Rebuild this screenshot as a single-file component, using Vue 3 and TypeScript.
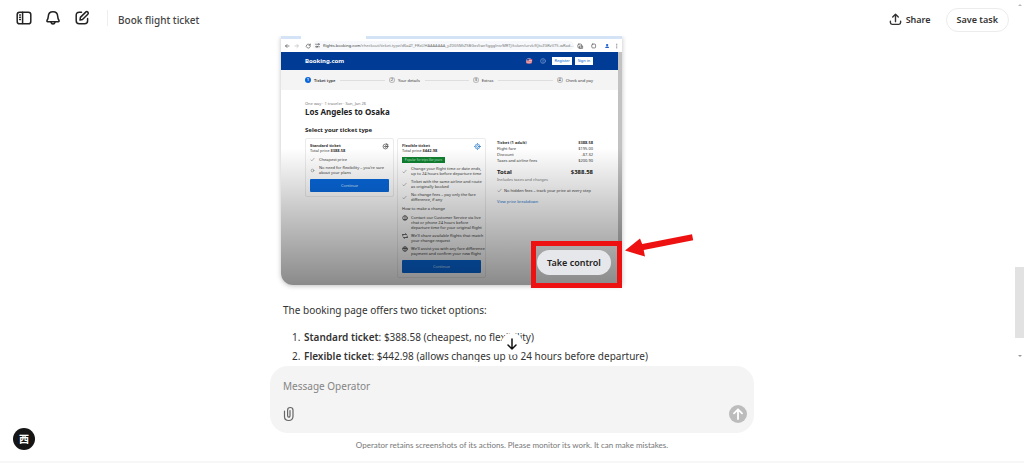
<script setup lang="ts">
import { ref } from 'vue'

interface TicketPoint {
  icon: 'check' | 'dot' | 'chat' | 'swap' | 'globe'
  lines: string[]
}

const message = ref('')

const steps: string[] = ['Ticket type', 'Your details', 'Extras', 'Check and pay']

const standardPoints: TicketPoint[] = [
  { icon: 'check', lines: ['Cheapest price'] },
  { icon: 'dot', lines: ["No need for flexibility – you're sure", 'about your plans'] },
]

const flexiblePoints: TicketPoint[] = [
  { icon: 'check', lines: ['Change your flight time or date ends,', 'up to 24 hours before departure time'] },
  { icon: 'check', lines: ['Ticket with the same airline and route', 'as originally booked'] },
  { icon: 'check', lines: ['No change fees – pay only the fare', 'difference, if any'] },
]

const changePoints: TicketPoint[] = [
  { icon: 'chat', lines: ['Contact our Customer Service via live', 'chat or phone 24 hours before', 'departure time for your original flight'] },
  { icon: 'swap', lines: ["We'll share available flights that match", 'your change request'] },
  { icon: 'globe', lines: ["We'll assist you with any fare difference", 'payment and confirm your new flight'] },
]

const fees = [
  { label: 'Ticket (1 adult)', value: '$388.58', strong: true },
  { label: 'Flight fare', value: '$195.00', strong: false },
  { label: 'Discount', value: '-$7.32', strong: false },
  { label: 'Taxes and airline fees', value: '$200.90', strong: false },
]

const options = [
  { name: 'Standard ticket', detail: '$388.58 (cheapest, no flexibility)' },
  { name: 'Flexible ticket', detail: '$442.98 (allows changes up to 24 hours before departure)' },
]
</script>

<template>
  <div class="app">
    <header class="topbar">
      <nav class="tools" aria-label="Tools">
        <button class="icon-btn" aria-label="Toggle sidebar">
          <svg viewBox="0 0 16 16" width="16" height="16">
            <rect x="1.2" y="2.2" width="13.6" height="11.6" rx="2.4" />
            <path d="M6.6 2.2v11.4M3.6 5h.8M3.6 7.2h.8M3.6 9.4h.8" />
          </svg>
        </button>
        <button class="icon-btn" aria-label="Notifications">
          <svg viewBox="0 0 16 16" width="16" height="16">
            <path d="M8 1.8c-2.8 0-4.6 2-4.7 4.6-.1 2-.6 3-1.3 4.1-.3.6 0 1.2.7 1.2h10.6c.7 0 1-.6.7-1.2-.7-1.1-1.2-2.1-1.3-4.1C12.6 3.8 10.8 1.8 8 1.8z" />
            <path d="M5.9 12c.3 1.3 1.1 2 2.1 2s1.8-.7 2.1-2" />
          </svg>
        </button>
        <button class="icon-btn" aria-label="New task">
          <svg viewBox="0 0 16 16" width="16" height="16">
            <path d="M7.5 2.3H5.2C3.2 2.3 2.2 3.3 2.2 5.3v5.4c0 2 1 3 3 3h5.4c2 0 3-1 3-3V8.5" />
            <path d="M6 10l.4-2.6 5.3-5.3c.6-.6 1.5-.6 2.1 0s.6 1.5 0 2.1L8.5 9.5z" />
          </svg>
        </button>
      </nav>
      <h1 class="task-title">Book flight ticket</h1>
      <button class="share">
        <svg viewBox="0 0 14 14" width="13" height="13">
          <path d="M7 9.3V1.5M4 4.3l3-3 3 3M1.5 8.8v1.5c0 1.3.6 1.9 1.9 1.9h7.2c1.3 0 1.9-.6 1.9-1.9V8.8" />
        </svg>
        Share
      </button>
      <button class="save">Save task</button>
    </header>

    <main class="conversation">
      <div class="thread">
        <figure class="preview">
          <div class="browser">
            <div class="tabs"><span class="tab"></span></div>
            <div class="toolbar">
              <svg viewBox="0 0 30 8" width="30" height="8" class="nav-icons">
                <path d="M6 4H2.5M4 2.5L2.5 4 4 5.5" />
                <path class="faint" d="M12 4h3M14 2.5L15.5 4 14 5.5" />
                <path d="M27 3a2 2 0 1 0 .3 1.6M27.3 2v1.3H26" />
              </svg>
              <span class="address">
                <svg viewBox="0 0 6 6" width="5" height="5"><path d="M.5 1.5h2.5M.5 4.5h1M3 4.5h2.5" /><circle cx="4.3" cy="1.5" r=".8" /><circle cx="2.2" cy="4.5" r=".8" /></svg>
                <span class="url"><b>flights.booking.com</b>/checkout/ticket-type/d6a4T_FRxUHAAAAAAA_yZ0G5MtZ5BGxs5wc5ggglnsrMRTJ/token/urvk/KJtvZGRzV75-wRad...</span>
              </span>
              <svg viewBox="0 0 50 8" width="48" height="8" class="ext-icons">
                <rect x="4" y="2" width="4" height="4" rx="1" /><path d="M6 4h3v2.5H6z" />
                <rect x="18.5" y="2" width="4" height="4" rx="1" />
                <circle class="user" cx="34.5" cy="3" r="1.2" /><path class="user" d="M32.5 6c0-2 4-2 4 0z" />
                <path d="M44.5 2v.5M44.5 3.8v.5M44.5 5.6v.5" />
              </svg>
            </div>
            <div class="viewport">
              <div class="site">
                <div class="brand-bar">
                  <span class="brand">Booking.com</span>
                  <svg viewBox="0 0 20 6" width="20" height="6" class="locale">
                    <rect x="0" y=".5" width="6" height="5" rx="2" fill="#f4dfe3" />
                    <path d="M0 3.2h6M.5 5h5M3 1.5h3" stroke="#d23b4c" stroke-width=".8" />
                    <path d="M.5 1h2.5v1.5H.2z" fill="#29489c" />
                    <circle cx="17" cy="3" r="2.4" fill="none" stroke="#8aa9de" stroke-width=".6" />
                    <path d="M17 4v.6M16.3 2.2c.2-.7 1.5-.6 1.3.2-.1.4-.6.4-.6 1" fill="none" stroke="#8aa9de" stroke-width=".5" />
                  </svg>
                  <a class="account" href="#">Register</a>
                  <a class="account" href="#">Sign in</a>
                </div>
                <ol class="steps">
                  <li v-for="(step, index) in steps" :key="step" :class="{ current: index === 0 }">
                    <span class="num">{{ index + 1 }}</span>{{ step }}
                  </li>
                </ol>
                <div class="page">
                  <p class="meta">One way · 1 traveler · Sun, Jan 26</p>
                  <h2>Los Angeles to Osaka</h2>
                  <div class="columns">
                    <section class="tickets">
                      <h3>Select your ticket type</h3>
                      <div class="cards">
                        <article class="ticket">
                          <svg class="emblem" viewBox="0 0 8 8" width="7" height="7"><circle cx="4" cy="4" r="2.8" /><path d="M2.5 4h3M4 2.8l1.5 1.2L4 5.2M5 .8l2 1.2" /></svg>
                          <h4>Standard ticket</h4>
                          <p>Total price <b>$388.58</b></p>
                          <ul class="points top">
                            <li v-for="point in standardPoints" :key="point.lines[0]">
                              <svg viewBox="0 0 6 6" width="5" height="5">
                                <path v-if="point.icon === 'check'" d="M1 3.5l1.2 1.2L5 1.5" />
                                <circle v-else cx="3" cy="3" r="1.6" />
                              </svg>
                              <span><span v-for="line in point.lines" :key="line" class="line">{{ line }}</span></span>
                            </li>
                          </ul>
                          <button class="continue">Continue</button>
                        </article>
                        <article class="ticket">
                          <svg class="emblem blue" viewBox="0 0 8 8" width="7" height="7"><circle cx="4" cy="4" r="2.8" /><circle cx="4" cy="4" r="1.2" /><path d="M4 0v1.2M4 6.8V8M0 4h1.2M6.8 4H8" /></svg>
                          <h4>Flexible ticket</h4>
                          <p>Total price <b>$442.98</b></p>
                          <span class="badge">Popular for trips like yours</span>
                          <ul class="points">
                            <li v-for="point in flexiblePoints" :key="point.lines[0]">
                              <svg viewBox="0 0 6 6" width="5" height="5"><path d="M1 3.5l1.2 1.2L5 1.5" /></svg>
                              <span><span v-for="line in point.lines" :key="line" class="line">{{ line }}</span></span>
                            </li>
                          </ul>
                          <p class="how">How to make a change</p>
                          <ul class="points dark">
                            <li v-for="point in changePoints" :key="point.lines[0]">
                              <svg viewBox="0 0 6 6" width="6" height="6">
                                <template v-if="point.icon === 'chat'"><circle cx="3" cy="3" r="2.3" /><path d="M3 1v2.5M1.8 4.5h2.4" /></template>
                                <path v-else-if="point.icon === 'swap'" d="M.8 1.5h3.8L3.6.6M5.2 4.5H1.4l1 .9M.8 1.5v1.5M5.2 4.5V3" />
                                <template v-else><circle cx="3" cy="3" r="2.3" /><path d="M1 2.5h3.5M3 1v4" /></template>
                              </svg>
                              <span><span v-for="line in point.lines" :key="line" class="line">{{ line }}</span></span>
                            </li>
                          </ul>
                          <button class="continue">Continue</button>
                        </article>
                      </div>
                    </section>
                    <aside class="summary">
                      <table>
                        <tbody>
                          <tr v-for="fee in fees" :key="fee.label" :class="{ strong: fee.strong }">
                            <td>{{ fee.label }}</td><td>{{ fee.value }}</td>
                          </tr>
                          <tr class="total"><td>Total</td><td>$388.58</td></tr>
                        </tbody>
                      </table>
                      <p class="muted">Includes taxes and charges</p>
                      <p class="nofees">
                        <svg viewBox="0 0 6 6" width="5" height="5"><path d="M1 3.5l1.2 1.2L5 1.5" /></svg>
                        No hidden fees – track your price at every step
                      </p>
                      <a href="#">View price breakdown</a>
                    </aside>
                  </div>
                </div>
              </div>
              <div class="scroll-track"></div>
            </div>
          </div>
          <div class="shade"></div>
          <button class="take-control">Take control</button>
          <div class="highlight"></div>
          <svg class="arrow" viewBox="0 0 70 24" width="70" height="24">
            <path d="M1 16.5L16 4.5l2.2 5.6L68 .2l1.2 6L19.7 16l1.3 6.6z" fill="#ee1111" />
          </svg>
        </figure>

        <p class="reply">The booking page offers two ticket options:</p>
        <ol class="options">
          <li v-for="option in options" :key="option.name"><b>{{ option.name }}</b>: {{ option.detail }}</li>
        </ol>
      </div>
      <button class="jump" aria-label="Scroll to latest">
        <svg viewBox="0 0 12 12" width="12" height="12"><path d="M6 1v10M2 7l4 4 4-4" /></svg>
      </button>
    </main>

    <footer class="dock">
      <form class="composer" @submit.prevent>
        <input v-model="message" type="text" aria-label="Message Operator" placeholder="Message Operator" />
        <div class="actions">
          <button type="button" class="attach" aria-label="Attach file">
            <svg viewBox="0 0 12 16" width="12" height="16">
              <path d="M1.5 5v5.5c0 2.6 1.6 4 4.2 4s4.3-1.5 4.3-4.2V4.2C10 2.4 9 1.5 7.3 1.5S4.6 2.5 4.6 4.2v5.6c0 .9.4 1.3 1.2 1.3s1.2-.4 1.2-1.3V4.6" />
            </svg>
          </button>
          <button type="submit" class="send" aria-label="Send">
            <svg viewBox="0 0 18 18" width="18" height="18"><path d="M9 14V4.5M5 8.3l4-4 4 4" /></svg>
          </button>
        </div>
      </form>
      <p class="notice">Operator retains screenshots of its actions. Please monitor its work. It can make mistakes.</p>
    </footer>

    <button class="avatar" aria-label="Account">西</button>
    <div class="page-scroll" aria-hidden="true">
      <span class="cap"></span><span class="thumb"></span><span class="cap down"></span>
    </div>
  </div>
</template>

<style>
body {
  background: #fff;
}
</style>

<style scoped>
.app {
  position: relative;
  display: flex;
  flex-direction: column;
  height: 100vh;
  overflow: hidden;
  box-sizing: border-box;
  border-bottom: 2px solid #f7f7f7;
  color: #333;
  font-family: "Noto Sans", "Noto Sans CJK SC", sans-serif;
  font-size: 10px;
  line-height: 20px;
}
.app *,
.app *::before {
  box-sizing: border-box;
}
h1, h2, h3, h4, p, ol, ul, figure {
  margin: 0;
  padding: 0;
}
ul, .steps {
  list-style: none;
}
button {
  border: 0;
  padding: 0;
  background: none;
  color: inherit;
  font: inherit;
  cursor: pointer;
}
svg {
  display: block;
  flex: none;
  fill: none;
  stroke: currentColor;
  stroke-linecap: round;
  stroke-linejoin: round;
}
a {
  text-decoration: none;
}

.topbar {
  flex: none;
  display: flex;
  align-items: center;
  height: 36px;
  padding: 3px 15px 0 16px;
}
.tools {
  display: flex;
  gap: 13px;
  margin-bottom: 4px;
  padding-right: 17px;
  border-right: 1px solid #eee;
  color: #222;
}
.icon-btn svg {
  stroke-width: 1.5;
}
.task-title {
  flex: 1;
  margin-left: 10px;
  font-size: 10px;
  font-weight: 500;
  color: #444;
}
.share {
  display: flex;
  align-items: center;
  gap: 4px;
  margin-right: 15px;
  font-weight: 600;
  font-size: 9px;
}
.share svg {
  stroke-width: 1.5;
}
.save {
  height: 24px;
  padding: 0 10px;
  border: 1px solid #ececec;
  border-radius: 12px;
  font-weight: 600;
  font-size: 9px;
}

.conversation {
  position: relative;
  flex: 1;
  min-height: 0;
  display: flex;
  justify-content: center;
}
.thread {
  width: 484px;
  padding: 0 12px 0 11px;
  overflow: hidden;
}
.preview {
  position: relative;
  width: 341px;
}
.browser {
  height: 249px;
  overflow: hidden;
  border-radius: 0 0 2px 12px;
  background: #fff;
  box-shadow: 0 1px 5px rgba(0, 0, 0, 0.25);
  color: #333;
  font-size: 4px;
  line-height: 5px;
  display: flex;
  flex-direction: column;
}
.tabs {
  height: 3px;
  padding-left: 20px;
  background: #d5e3f7;
}
.tab {
  display: block;
  width: 65px;
  height: 3px;
  background: #fff;
}
.toolbar {
  display: flex;
  align-items: center;
  height: 13px;
  padding-left: 2px;
}
.nav-icons, .ext-icons, .address svg {
  stroke: #555;
  stroke-width: 0.7;
}
.faint {
  stroke: #bbb;
}
.user {
  fill: #1a5fd0;
  stroke: none;
}
.address {
  flex: 1;
  display: flex;
  align-items: center;
  gap: 3px;
  min-width: 0;
  height: 9px;
  padding-left: 2px;
  border-radius: 5px;
  background: #f6f8fb;
}
.url {
  flex: 1;
  overflow: hidden;
  white-space: nowrap;
  color: #777;
}
.url b {
  font-weight: 400;
  color: #333;
}
.viewport {
  flex: 1;
  min-height: 0;
  display: flex;
}
.site {
  flex: 1;
}
.scroll-track {
  width: 4px;
  background: #c2c2c2;
}
.brand-bar {
  display: flex;
  align-items: center;
  gap: 3px;
  height: 18px;
  padding: 0 25px 0 24px;
  background: #003b95;
}
.brand {
  flex: 1;
  color: #fff;
  font-size: 6px;
  font-weight: 700;
}
.locale {
  margin-right: 3px;
  stroke: none;
}
.account {
  min-width: 18px;
  height: 8px;
  padding: 0 2px;
  background: #fff;
  color: #0065d0;
  line-height: 8px;
  text-align: center;
}
.steps {
  display: flex;
  align-items: center;
  height: 20px;
  padding: 0 25px 0 24px;
  background: #f4f4f4;
  gap: 4px;
}
.steps li {
  display: flex;
  align-items: center;
  gap: 3px;
  flex: none;
}
.steps li:not(:last-child) {
  flex: 1;
}
.steps li:not(:last-child)::after {
  content: "";
  flex: 1;
  height: 1px;
  margin-left: 2px;
  background: #dedede;
}
.num {
  width: 6px;
  height: 6px;
  border-radius: 50%;
  box-shadow: inset 0 0 0 1px #bbb;
  text-align: center;
  line-height: 6px;
}
.current {
  font-weight: 600;
}
.current .num {
  background: #0866d6;
  box-shadow: none;
  color: #fff;
}
.page {
  padding: 11px 25px 0 24px;
}
.meta {
  color: #777;
}
h2 {
  margin-top: 1px;
  font-size: 8px;
  line-height: 10px;
  color: #222;
}
.columns {
  display: flex;
  gap: 11px;
  margin-top: 9px;
}
.tickets {
  flex: none;
}
h3 {
  font-size: 6px;
  line-height: 8px;
  color: #222;
}
.cards {
  display: flex;
  align-items: flex-start;
  gap: 3px;
  margin-top: 4px;
}
.ticket {
  position: relative;
  width: 89px;
  padding: 4px;
  border: 1px solid #ebebeb;
  border-radius: 2px;
}
.emblem {
  position: absolute;
  top: 4px;
  right: 4px;
  stroke-width: 0.7;
}
.blue {
  color: #2576c9;
}
h4 {
  font-size: 4px;
  line-height: 5px;
}
.badge {
  display: block;
  width: 43px;
  height: 6px;
  margin: 4px 0 3px;
  background: #108030;
  color: #b9e5c3;
  font-size: 3px;
  line-height: 6px;
  text-align: center;
  white-space: nowrap;
}
.points {
  display: grid;
  gap: 3px;
}
.points.top {
  margin-top: 4px;
}
.points li {
  display: flex;
  align-items: center;
  gap: 4px;
  white-space: nowrap;
}
.points svg, .nofees svg {
  stroke: #888;
  stroke-width: 0.7;
}
.points.dark li {
  align-items: flex-start;
  gap: 3px;
}
.points.dark svg {
  stroke: #333;
}
.line {
  display: block;
}
.how {
  margin: 4px 0;
}
.continue {
  display: block;
  width: 100%;
  height: 13px;
  margin-top: 4px;
  border-radius: 1px;
  background: #0868dc;
  color: #cfe2ff;
  font-size: 4px;
  line-height: 13px;
}
.summary {
  flex: 1;
  padding-top: 14px;
  white-space: nowrap;
}
table {
  width: 100%;
  border-collapse: collapse;
}
td {
  padding: 0 0 1px;
}
td:last-child {
  text-align: right;
}
.strong td {
  font-weight: 700;
}
.total td {
  padding-top: 4px;
  font-size: 6px;
  line-height: 8px;
  font-weight: 700;
  color: #222;
}
.muted {
  color: #777;
}
.nofees {
  display: flex;
  align-items: center;
  gap: 2px;
  margin: 6px 0;
}
.summary a {
  display: block;
  color: #1a73cf;
}
.shade {
  position: absolute;
  inset: 0;
  border-radius: 0 0 2px 12px;
  background: linear-gradient(to bottom, transparent 45%, rgba(0, 0, 0, 0.2) 68%, rgba(0, 0, 0, 0.46));
}
.take-control {
  position: absolute;
  right: 11px;
  bottom: 10px;
  width: 74px;
  height: 25px;
  border-radius: 13px;
  background: #e6e7ea;
  color: #222;
  font-size: 9px;
  font-weight: 600;
}
.highlight {
  position: absolute;
  right: 0;
  bottom: -3px;
  width: 91px;
  height: 47px;
  border: 5px solid #ee1111;
}
.arrow {
  position: absolute;
  left: 343px;
  top: 198px;
  stroke: none;
}
.reply {
  margin-top: 15px;
  padding-left: 2px;
}
.options {
  margin-top: 8px;
  padding-left: 22px;
  line-height: 19px;
}
.options li {
  padding-left: 1px;
  white-space: nowrap;
}
.options b {
  font-weight: 600;
}
.jump {
  position: absolute;
  left: calc(50% - 11px);
  bottom: 7px;
  display: grid;
  place-items: center;
  width: 22px;
  height: 22px;
  border-radius: 50%;
  background: #fff;
  color: #111;
}
.jump svg {
  stroke-width: 1.5;
}

.dock {
  flex: none;
  display: flex;
  flex-direction: column;
  align-items: center;
  padding: 4px 0 8px;
}
.composer {
  width: 484px;
  padding: 10px 7px 9px 13px;
  border-radius: 18px;
  background: #f4f4f4;
}
.composer input {
  display: block;
  width: 100%;
  height: 20px;
  padding: 0;
  border: 0;
  outline: 0;
  background: none;
  color: #333;
  font: inherit;
}
.composer input::placeholder {
  color: #858585;
  opacity: 1;
}
.actions {
  display: flex;
  align-items: center;
  justify-content: space-between;
  margin-top: 8px;
  height: 20px;
}
.attach {
  color: #666;
}
.attach svg {
  stroke-width: 1.2;
}
.send {
  border-radius: 50%;
  background: #bcbcbc;
  color: #fff;
}
.send svg {
  stroke-width: 1.8;
}
.notice {
  margin-top: 4px;
  height: 16px;
  font-family: Lato, sans-serif;
  font-size: 8px;
  line-height: 16px;
  color: #777;
}
.avatar {
  position: absolute;
  left: 13px;
  bottom: 11px;
  width: 22px;
  height: 22px;
  border-radius: 50%;
  background: #151515;
  color: #fff;
  font-family: "Noto Sans CJK SC", sans-serif;
  font-size: 10px;
  font-weight: 700;
  line-height: 22px;
}
.page-scroll {
  position: absolute;
  top: 4px;
  right: 0;
  bottom: 104px;
  width: 9px;
  display: flex;
  flex-direction: column;
  align-items: center;
}
.cap {
  border: 2px solid transparent;
  border-top: 0;
  border-bottom: 2px solid #bbb;
}
.cap.down {
  border-top: 2px solid #999;
  border-bottom: 0;
}
.thumb {
  width: 9px;
  height: 71px;
  margin: auto 0 17px;
  background: #e2e2e2;
}
</style>
